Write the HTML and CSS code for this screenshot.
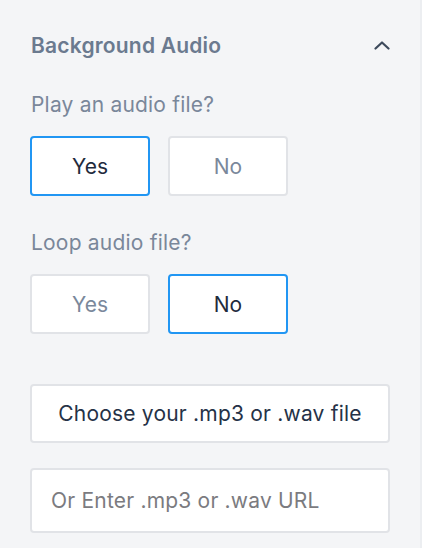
FILE: index.html
```html
<!DOCTYPE html>
<html>
<head>
<meta charset="utf-8">
<link rel="stylesheet" href="styles.css">
</head>
<body>
<div class="panel">
  <div class="header">
    <h2 class="title">Background Audio</h2>
    <svg class="chevron" width="16" height="10" viewBox="0 0 16 10"><path d="M1.5 8.5 L8 2.5 L14.5 8.5" fill="none" stroke="#3d4a5c" stroke-width="2.2" stroke-linecap="round" stroke-linejoin="round"/></svg>
  </div>
  <div class="field">
    <div class="label">Play an audio file?</div>
    <div class="toggle">
      <button class="opt active">Yes</button>
      <button class="opt">No</button>
    </div>
  </div>
  <div class="field">
    <div class="label">Loop audio file?</div>
    <div class="toggle">
      <button class="opt">Yes</button>
      <button class="opt active">No</button>
    </div>
  </div>
  <button class="choose">Choose your .mp3 or .wav file</button>
  <input class="url" type="text" placeholder="Or Enter .mp3 or .wav URL">
</div>
</body>
</html>
```
FILE: styles.css
```css
html, body {
  margin: 0;
  padding: 0;
  background: #f4f5f7;
  height: 100%;
}
body {
  font-family: Inter, "Noto Sans", "Liberation Sans", sans-serif;
  border-right: 2px solid #eceef1;
  box-sizing: border-box;
}
.panel {
  padding: 30px 30px 0 30px;
  display: flex;
  flex-direction: column;
}
.header {
  display: flex;
  align-items: center;
  justify-content: space-between;
  height: 30px;
}
.title {
  margin: 0 0 0 1px;
  font-size: 21px;
  font-weight: 600;
  color: #6b7a8f;
  letter-spacing: 0.2px;
}
.chevron {
  margin-right: 0;
}
.field {
  margin-top: 32px;
}
.field + .field {
  margin-top: 34px;
}
.label {
  font-size: 21px;
  color: #7a879a;
  margin-left: 1px;
  line-height: 26px;
  letter-spacing: 0.2px;
}
.toggle {
  display: flex;
  gap: 18px;
  margin-top: 18px;
}
.opt {
  width: 120px;
  height: 60px;
  background: #fff;
  border: 2px solid #e1e3e7;
  border-radius: 4px;
  font-family: inherit;
  font-size: 21px;
  color: #7a889b;
}
.opt.active {
  border-color: #2196f3;
  color: #1f2b3d;
}
.choose {
  margin-top: 50px;
  height: 59px;
  background: #fff;
  border: 2px solid #e1e3e7;
  border-radius: 4px;
  font-family: inherit;
  font-size: 21px;
  letter-spacing: 0.2px;
  color: #253247;
}
.url {
  margin-top: 25px;
  height: 65px;
  box-sizing: border-box;
  background: #fff;
  border: 2px solid #e1e3e7;
  border-radius: 4px;
  font-family: inherit;
  font-size: 21px;
  letter-spacing: 0.2px;
  padding: 0 19px;
  color: #253247;
}
.url::placeholder {
  color: #7b7b7f;
}
```
